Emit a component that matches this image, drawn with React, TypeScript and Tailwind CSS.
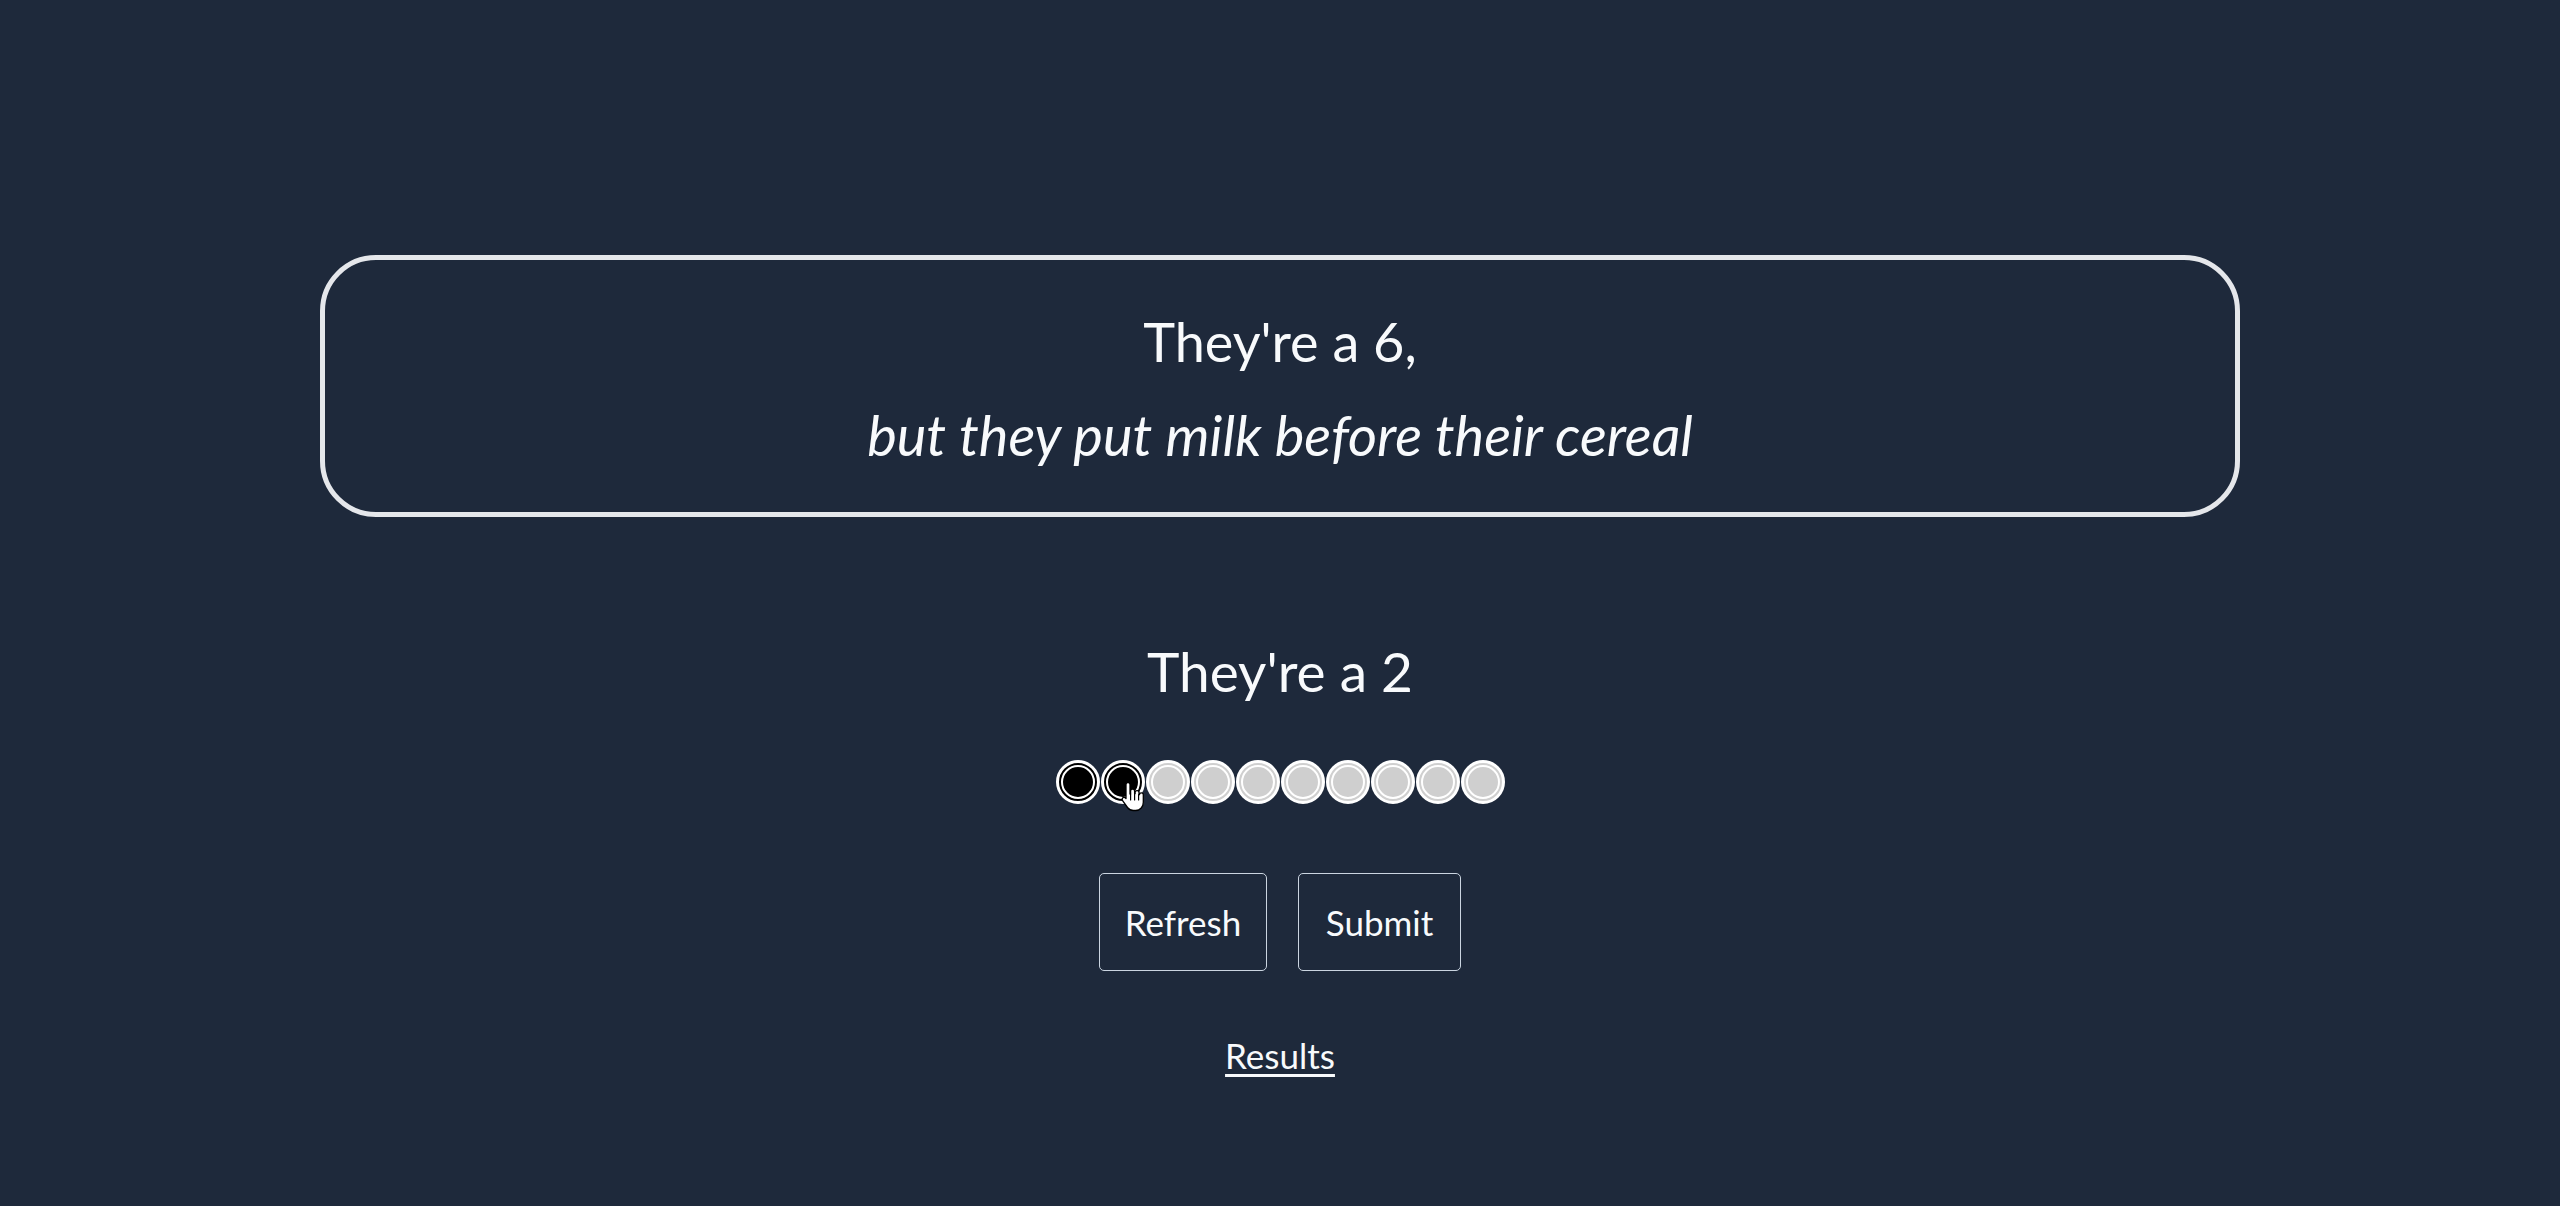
import React, { useState } from 'react';

const font = { fontFamily: 'Lato, "Open Sans", sans-serif' };

function HandCursor() {
  return (
    <svg width="26" height="32" viewBox="0 0 26 32" className="absolute pointer-events-none" style={{ left: 64, top: 20 }}>
      <path
        d="M8 2.5c1.2 0 2 .9 2 2V14l.6-.1V11c0-1.1.9-1.9 2-1.9s2 .8 2 1.9v2.6l.5.1V12.5c0-1.1.9-1.9 2-1.9s1.9.8 1.9 1.9v2l.5.1c0-1.1.9-1.8 1.9-1.8s1.9.8 1.9 1.9v7.5c0 4.5-3 8.3-7.6 8.3h-2.4c-2.6 0-4.2-1-5.8-3L2.6 20.6c-.7-.9-.6-2.1.2-2.8.8-.7 2-.6 2.7.2L6 18.6V4.5c0-1.1.8-2 2-2z"
        fill="#fff"
        stroke="#000"
        strokeWidth="1.3"
        strokeLinejoin="round"
      />
      <path d="M10.6 14v6M14.6 13.6v6.4M18.6 14.6v5.4" stroke="#000" strokeWidth="1.2" strokeLinecap="round" />
    </svg>
  );
}

export default function App() {
  const [rating, setRating] = useState(2);

  return (
    <div className="min-h-screen bg-[#1e293b] text-[#f8fafc] flex flex-col items-center" style={font}>
      {/* prompt card */}
      <div className="mt-[255px] w-[1920px] border-[5px] border-[#e5e7eb] rounded-[56px] pt-[48px] pb-[42px] flex flex-col items-center">
        <p className="text-[54px] leading-tight">They're a 6,</p>
        <p className="text-[56px] leading-tight italic mt-[24px]">but they put milk before their cereal</p>
      </div>

      <h2 className="mt-[120px] text-[55px] leading-tight">They're a {rating}</h2>

      {/* rating dots */}
      <div className="relative mt-[55px] flex gap-px">
        {Array.from({ length: 10 }, (_, i) => {
          const on = i < rating;
          return (
            <button
              key={i}
              onClick={() => setRating(i + 1)}
              className={`w-11 h-11 rounded-full border-[3px] border-white p-[2px] ${on ? 'bg-black' : 'bg-[#cfcfcf]'}`}
            >
              <span className={`block w-full h-full rounded-full border-2 border-white ${on ? 'bg-black' : 'bg-[#cfcfcf]'}`} />
            </button>
          );
        })}
        <HandCursor />
      </div>

      <div className="mt-[69px] flex gap-[31px]">
        <button className="w-[168px] h-[98px] border border-[#cbd5e1] rounded-[5px] text-[35px]">Refresh</button>
        <button className="w-[163px] h-[98px] border border-[#cbd5e1] rounded-[5px] text-[35px]">Submit</button>
      </div>

      <a href="#" className="mt-[58px] text-[35px] underline underline-offset-[5px]">Results</a>
    </div>
  );
}
